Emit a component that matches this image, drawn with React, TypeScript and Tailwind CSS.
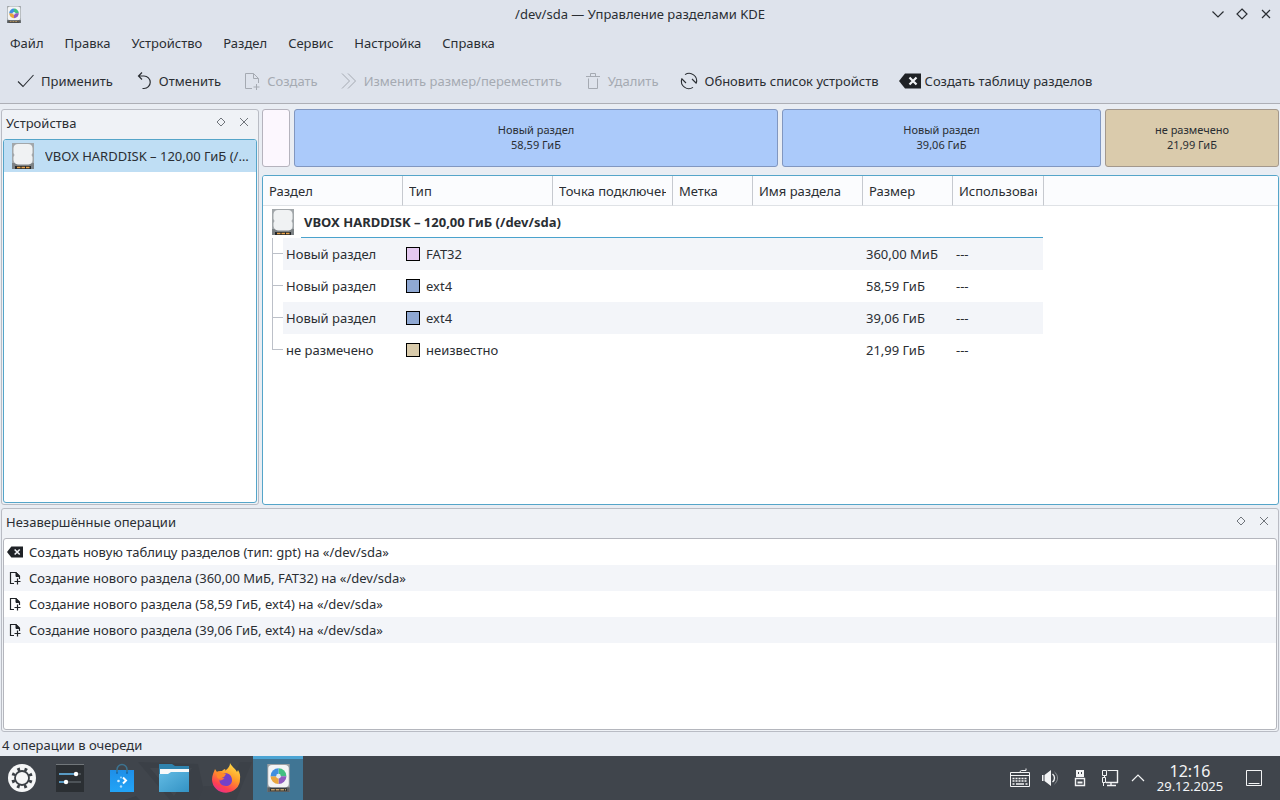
import React from "react";
import clsx from "clsx";

const menu = [
  "Файл",
  "Правка",
  "Устройство",
  "Раздел",
  "Сервис",
  "Настройка",
  "Справка",
];

const actions = [
  { title: "Применить", Icon: ApplyIcon },
  { title: "Отменить", Icon: UndoIcon },
  { title: "Создать", Icon: NewIcon, disabled: true },
  { title: "Изменить размер/переместить", Icon: ResizeIcon, disabled: true },
  { title: "Удалить", Icon: TrashIcon, disabled: true },
  { title: "Обновить список устройств", Icon: RefreshIcon },
  { title: "Создать таблицу разделов", Icon: ClearIcon },
];

const blocks = [
  { title: "", size: "", grow: 26, color: "bg-[#fcf7fe] border-[#b5b3bd]" },
  {
    title: "Новый раздел",
    size: "58,59 ГиБ",
    grow: 482,
    color: "bg-[#abcafa] border-[#8197c0]",
  },
  {
    title: "Новый раздел",
    size: "39,06 ГиБ",
    grow: 317,
    color: "bg-[#abcafa] border-[#8197c0]",
  },
  {
    title: "не размечено",
    size: "21,99 ГиБ",
    grow: 172,
    color: "bg-[#dacbac] border-[#a3988c]",
  },
];

const columns = [
  { title: "Раздел", width: "w-[140px]" },
  { title: "Тип", width: "w-[150px]" },
  { title: "Точка подключения", width: "w-[120px]" },
  { title: "Метка", width: "w-[80px]" },
  { title: "Имя раздела", width: "w-[110px]" },
  { title: "Размер", width: "w-[90px]" },
  { title: "Использовано", width: "w-[91px]" },
];

const partitions = [
  { name: "Новый раздел", fs: "FAT32", size: "360,00 МиБ", color: "bg-[#e4c9f0]" },
  { name: "Новый раздел", fs: "ext4", size: "58,59 ГиБ", color: "bg-[#8fa8d3]" },
  { name: "Новый раздел", fs: "ext4", size: "39,06 ГиБ", color: "bg-[#8fa8d3]" },
  { name: "не размечено", fs: "неизвестно", size: "21,99 ГиБ", color: "bg-[#d9cbab]" },
];

const operations = [
  { title: "Создать новую таблицу разделов (тип: gpt) на «/dev/sda»", Icon: ClearIcon },
  { title: "Создание нового раздела (360,00 МиБ, FAT32) на «/dev/sda»", Icon: NewSmallIcon },
  { title: "Создание нового раздела (58,59 ГиБ, ext4) на «/dev/sda»", Icon: NewSmallIcon },
  { title: "Создание нового раздела (39,06 ГиБ, ext4) на «/dev/sda»", Icon: NewSmallIcon },
];

export default function App() {
  return (
    <div className="flex min-h-screen flex-col bg-[#e9edf3] font-['Noto_Sans',sans-serif] text-[13px] leading-[18px] text-[#2a2e33]">
      <header className="border-b border-[#adafb6] bg-[#dee3ec]">
        <TitleBar />
        <nav className="flex h-[30px] items-center gap-px">
          {menu.map((item) => (
            <button key={item} className="px-[10px]">
              {item}
            </button>
          ))}
        </nav>
        <div className="flex h-[45px] items-center gap-1 pl-[7px]">
          {actions.map(({ title, Icon, disabled }) => (
            <button
              key={title}
              disabled={disabled}
              className="flex items-center gap-1 px-2 whitespace-nowrap disabled:text-[#a5aab2]"
            >
              <Icon className="h-[22px] w-[22px]" />
              {title}
            </button>
          ))}
        </div>
      </header>

      <main className="flex flex-1 gap-[3px] px-px pt-[5px] pb-[3px]">
        <Dock title="Устройства" className="w-[258px] shrink-0" active>
          <button className="flex h-8 w-full items-center gap-[10px] bg-[#bfdef4] pr-1 pl-[7px] text-left">
            <DiskIcon className="h-[26px] w-6 shrink-0" />
            <span className="truncate">VBOX HARDDISK – 120,00 ГиБ (/dev/sda)</span>
          </button>
        </Dock>
        <div className="flex min-w-0 flex-1 flex-col gap-2">
          <div className="flex h-[58px] gap-1">
            {blocks.map((block, i) => (
              <button
                key={i}
                aria-label={block.title ? undefined : "FAT32"}
                style={{ flexGrow: block.grow }}
                className={clsx(
                  "min-w-0 basis-0 rounded-[3px] border pb-0.5 text-[11px] leading-[15px]",
                  block.color
                )}
              >
                {block.title}
                <br />
                {block.size}
              </button>
            ))}
          </div>
          <PartitionTable />
        </div>
      </main>

      <section className="flex h-56 px-px">
        <Dock title="Незавершённые операции" className="flex-1">
          <ul>
            {operations.map(({ title, Icon }, i) => (
              <li
                key={i}
                className="flex h-[26px] items-center gap-[6px] pl-[3px] even:bg-[#f3f5f9]"
              >
                <Icon className="h-4 w-4" />
                {title}
              </li>
            ))}
          </ul>
        </Dock>
      </section>

      <div className="flex h-6 items-center px-0.5 pt-0.5">4 операции в очереди</div>
      <Taskbar />
    </div>
  );
}

function TitleBar() {
  return (
    <div className="grid h-7 grid-cols-[1fr_auto_1fr] items-center">
      <PartitionManagerIcon className="ml-[7px] h-[17px] w-[14px]" />
      <h1>/dev/sda — Управление разделами KDE</h1>
      <div className="flex justify-end pr-0.5">
        <button aria-label="Свернуть" className="flex w-6 justify-center">
          <svg viewBox="0 0 16 16" className="h-4 w-4 fill-none stroke-current stroke-[1.2]">
            <path d="M2.500 5.500 8 11l5.500-5.500" />
          </svg>
        </button>
        <button aria-label="Восстановить" className="flex w-6 justify-center">
          <svg viewBox="0 0 16 16" className="h-4 w-4 fill-none stroke-current stroke-[1.2]">
            <path d="M8 3l5 5-5 5-5-5z" />
          </svg>
        </button>
        <button aria-label="Закрыть" className="flex w-6 justify-center">
          <svg viewBox="0 0 16 16" className="h-4 w-4 fill-none stroke-current stroke-[1.2]">
            <path d="M4 4l8 8m0-8l-8 8" />
          </svg>
        </button>
      </div>
    </div>
  );
}

function Dock({
  title,
  className,
  active,
  children,
}: {
  title: string;
  className?: string;
  active?: boolean;
  children: React.ReactNode;
}) {
  return (
    <div
      className={clsx(
        "flex flex-col rounded-[3px] border border-[#b9bcc4] bg-[#eff2f6] px-px pb-px",
        className
      )}
    >
      <div className="flex h-[29px] items-center gap-[7px] pr-[5px] pb-1 pl-[3px]">
        <h2 className="flex-1">{title}</h2>
        <button aria-label="Открепить">
          <svg viewBox="0 0 16 16" className="h-4 w-4 fill-none stroke-[#70757b]">
            <path d="M8 3l4 4-4 4-4-4z" />
          </svg>
        </button>
        <button aria-label="Закрыть панель">
          <svg viewBox="0 0 16 16" className="h-4 w-4 fill-none stroke-[#70757b]">
            <path d="M4 3l8 8m0-8l-8 8" />
          </svg>
        </button>
      </div>
      <div
        className={clsx(
          "flex-1 overflow-hidden rounded-[3px] border bg-white",
          active ? "border-[#55a5c9]" : "border-[#b4b6bd]"
        )}
      >
        {children}
      </div>
    </div>
  );
}

function PartitionTable() {
  return (
    <div className="flex-1 overflow-hidden rounded-[3px] border border-[#55a5c9] bg-white">
      <table className="w-full table-fixed border-separate border-spacing-0 text-left">
        <thead>
          <tr className="h-[30px] bg-[#fbfcfe]">
            {columns.map((col) => (
              <th
                key={col.title}
                className={clsx(
                  "border-r border-b border-r-[#c6c9cf] border-b-[#dfe2e6] py-0 pr-[6px] pl-[6px] font-normal",
                  col.width
                )}
              >
                <div className="overflow-hidden whitespace-nowrap">{col.title}</div>
              </th>
            ))}
            <th className="border-b border-[#dfe2e6]" />
          </tr>
        </thead>
        <tbody>
          <tr>
            <td colSpan={7} className="p-0">
              <div className="flex h-8 items-stretch gap-[6px] pr-px pl-2">
                <DiskIcon className="mt-[3px] h-[26px] w-6" />
                <div className="flex flex-1 items-center border-b border-b-[#4ba3cd] pl-[3px] font-bold">
                  VBOX HARDDISK – 120,00 ГиБ (/dev/sda)
                </div>
              </div>
            </td>
            <td />
          </tr>
          {partitions.map((p, i) => {
            const bg = i % 2 === 0 ? "bg-[#f3f5f9]" : "bg-white";
            return (
              <tr key={i} className="h-8">
                <td className="p-0">
                  <div className="flex h-8 pl-[9px]">
                    <div className="w-[11px] shrink-0">
                      <div className="h-4 border-b border-l border-[#bcc0c8]" />
                      {i < partitions.length - 1 && (
                        <div className="h-4 border-l border-[#bcc0c8]" />
                      )}
                    </div>
                    <div className={clsx("flex flex-1 items-center pl-[3px] whitespace-nowrap", bg)}>
                      {p.name}
                    </div>
                  </div>
                </td>
                <td className={clsx("px-[3px] py-0", bg)}>
                  <div className="flex items-center gap-[6px]">
                    <span className={clsx("h-[14px] w-[14px] border border-black", p.color)} />
                    {p.fs}
                  </div>
                </td>
                <td className={bg} />
                <td className={bg} />
                <td className={bg} />
                <td className={clsx("px-[3px] py-0 whitespace-nowrap", bg)}>{p.size}</td>
                <td className={clsx("border-r border-white px-[3px] py-0", bg)}>---</td>
                <td />
              </tr>
            );
          })}
        </tbody>
      </table>
    </div>
  );
}

function Taskbar() {
  const apps = [
    { title: "Параметры системы", Icon: SettingsIcon },
    { title: "Discover", Icon: DiscoverIcon },
    { title: "Dolphin", Icon: FolderIcon },
    { title: "Firefox", Icon: FirefoxIcon },
  ];
  return (
    <footer className="relative flex h-11 items-stretch justify-between bg-[#40454c] text-[#f3f4f5]">
      {/* wallpaper showing through the panel */}
      <svg viewBox="0 0 320 44" className="absolute top-0 left-0 h-11 w-80" aria-hidden="true">
        <path d="M138 6l32 38h36L198 8z" fill="#3b4047" />
        <path d="M150 12l24 28 18-28z" fill="#42474e" />
        <path d="M240 6h12l-16 38h-38l6-14h24z" fill="#3c4148" />
        <path d="M136 40l-12 4h16z" fill="#3a3f45" />
      </svg>
      <div className="relative flex gap-0.5">
        <button aria-label="Меню приложений" className="flex w-[43px] items-center justify-center">
          <LauncherIcon className="h-7 w-7" />
        </button>
        {apps.map(({ title, Icon }) => (
          <button
            key={title}
            aria-label={title}
            className="flex w-[50px] items-center justify-center"
          >
            <Icon className="h-8 w-8" />
          </button>
        ))}
        <button
          aria-label="Управление разделами"
          className="flex w-[50px] items-center justify-center border-t-[3px] border-[#4ca4d3] bg-[#407594] pb-[3px]"
        >
          <PartitionManagerIcon className="h-[28px] w-[23px]" />
        </button>
      </div>
      <Tray />
    </footer>
  );
}

function Tray() {
  return (
    <div className="flex items-center pr-px">
      <button aria-label="Клавиатура" className="flex w-[30px] justify-center">
        <svg viewBox="0 0 22 22" className="h-[22px] w-[22px] fill-none stroke-current">
          <path d="M1.500 5.500h19v14h-19zM1.500 8.500h19M11 5.500V4.500l1.500-1h4.500V1.500" />
          <path d="M3.500 11.500h15M3.500 14h15" strokeWidth="1.600" strokeDasharray="2 1" />
          <path d="M3.500 17h2m1.500 0h8m1.500 0h2" strokeWidth="1.600" />
        </svg>
      </button>
      <button aria-label="Громкость" className="flex w-[30px] justify-center">
        <svg viewBox="0 0 22 22" className="h-[22px] w-[22px] fill-none stroke-current">
          <path d="M3 8h1.500v6H3zM5.500 8 12 3v16l-6.500-5z" fill="currentColor" stroke="none" />
          <path d="M13.500 7a5 5 0 0 1 0 8" strokeWidth="1.400" />
          <path d="M15.500 5a7.500 7.500 0 0 1 0 12" opacity=".4" />
        </svg>
      </button>
      <button aria-label="Съёмные носители" className="flex w-[30px] justify-center">
        <svg viewBox="0 0 22 22" className="h-[22px] w-[22px] fill-none stroke-current">
          <path d="M7 3h8v7H7z" fill="currentColor" stroke="none" />
          <path d="M9.500 5v2m3-2v2" stroke="#40454c" />
          <path d="M6.500 11.500h9v7h-9z" strokeWidth="1.400" />
          <path d="M8.500 15.500h5" strokeWidth="2" />
        </svg>
      </button>
      <button aria-label="Сеть" className="flex w-[30px] justify-center">
        <svg viewBox="0 0 22 22" className="h-[22px] w-[22px] fill-none stroke-current">
          <path d="M8.500 3.500h10v12h-11M3.500 3.500h4v5h-4zM5.500 8.500v2m-2 0h3v5h-3zM4.500 16v3" />
          <path d="M18.500 3v13M7 15.500h12M8 18.500h9M12 16v2" strokeWidth="1.400" />
        </svg>
      </button>
      <button aria-label="Показать скрытые значки" className="flex w-[26px] justify-center">
        <svg viewBox="0 0 16 16" className="h-4 w-4 fill-none stroke-current stroke-[1.2]">
          <path d="M2 11l6-6 6 6" />
        </svg>
      </button>
      <button className="w-[78px] text-center">
        <span className="block text-base leading-[16px]">12:16</span>
        <span className="block leading-[14px]">29.12.2025</span>
      </button>
      <button aria-label="Показать рабочий стол" className="flex w-[50px] justify-center">
        <svg viewBox="0 0 18 18" className="h-[18px] w-[18px] fill-none stroke-current">
          <path d="M1.500 1.500h15v15h-15zM3.500 14.500h11" />
        </svg>
      </button>
    </div>
  );
}

/* toolbar icons */

type IconProps = { className?: string };

function ApplyIcon({ className }: IconProps) {
  return (
    <svg viewBox="0 0 22 22" className={clsx("fill-none stroke-current stroke-[1.1]", className)}>
      <path d="M3 11.500l5 5L18.500 5" />
    </svg>
  );
}

function UndoIcon({ className }: IconProps) {
  return (
    <svg viewBox="0 0 22 22" className={clsx("fill-none stroke-current stroke-[1.2]", className)}>
      <path d="M9 2.500 5.500 6 9 9.500M5.500 6H11a6 6 0 0 1 0 12.500H9.500" />
    </svg>
  );
}

function NewIcon({ className }: IconProps) {
  return (
    <svg viewBox="0 0 22 22" className={clsx("fill-none stroke-current", className)}>
      <path d="M11 18.500H4.500v-15h8l5 5V13M12.500 3.500v5h5M15.500 14v6m-3-3h6" />
    </svg>
  );
}

function NewSmallIcon({ className }: IconProps) {
  return (
    <svg viewBox="0 0 16 16" className={clsx("fill-none stroke-[#1f2226]", className)}>
      <path d="M7 13.500H3.500v-11H9l3.500 3.500v3" strokeWidth="1.200" />
      <path d="M9 2.500 12.500 6.500H9z" fill="#1f2226" />
      <path d="M10.500 8.500v6m-3-3h6" strokeWidth="1.200" />
    </svg>
  );
}

function ResizeIcon({ className }: IconProps) {
  return (
    <svg viewBox="0 0 22 22" className={clsx("fill-none stroke-current", className)}>
      <path d="M4 3.500l7.500 7.500L4 18.500M10 3.500l7.500 7.500-7.500 7.500" />
    </svg>
  );
}

function TrashIcon({ className }: IconProps) {
  return (
    <svg viewBox="0 0 22 22" className={clsx("fill-none stroke-current", className)}>
      <path d="M4 6.500h14M8.500 6.500v-3h5v3M6.500 8.500v10h9v-10" />
    </svg>
  );
}

function RefreshIcon({ className }: IconProps) {
  return (
    <svg viewBox="0 0 22 22" className={clsx("fill-none stroke-current stroke-[1.1]", className)}>
      <path d="M7 4.600A7.500 7.500 0 0 1 18.300 13M18.500 13.500l-4.500-4.500" />
      <path d="M15 17.400A7.500 7.500 0 0 1 3.700 9M3.500 8.500l4.500 4.500" />
    </svg>
  );
}

function ClearIcon({ className }: IconProps) {
  return (
    <svg viewBox="0 0 22 22" className={className}>
      <path d="M0 11l6-7.500h16v15H6z" fill="#1f2226" />
      <path d="M10.500 7.500l7 7m0-7l-7 7" stroke="#f1f3f6" strokeWidth="2.200" />
    </svg>
  );
}

/* colour icons */

function DiskIcon({ className }: IconProps) {
  return (
    <svg viewBox="0 0 24 26" className={className}>
      <path d="M1 0h22v26H1z" fill="#a2a7aa" />
      <path d="M1 20h22v6H1z" fill="#7c8184" />
      <path
        d="M7 1h10q4 0 4.500 4v5l-1 2 1 2v3q0 4-4 4.500H7q-4-.500-4.500-4.500v-3l1-2-1-2V5Q3 1 7 1z"
        fill="#f0f2f3"
      />
      <path d="M4 23h16v3H4z" fill="#25282a" />
      <path d="M6 24.500h12.500" stroke="#eba44c" strokeWidth="1.400" strokeDasharray="3.500 1" />
    </svg>
  );
}

function PartitionManagerIcon({ className }: IconProps) {
  return (
    <svg viewBox="4 1 24 30" className={className}>
      <path d="M4 1h24v30H4z" fill="#9ba0a3" />
      <path d="M4 26h24v5H4z" fill="#5b6063" />
      <path d="M9 2h14q4 0 4 4v16q0 4-4 4H9q-4 0-4-4V6q0-4 4-4z" fill="#f3f4f5" />
      <path d="M16 14V5.500a8.500 8.500 0 0 1 8.500 8.500z" fill="#42bf82" />
      <path d="M16 14h8.500a8.500 8.500 0 0 1-8.500 8.500z" fill="#8f5bc0" />
      <path d="M16 14v8.500a8.500 8.500 0 0 1-8.500-8.500z" fill="#e9a63e" />
      <path d="M16 14H7.500a8.500 8.500 0 0 1 8.500-8.500z" fill="#3f8fe0" />
      <circle cx="16" cy="14" r="2.500" fill="#e4eaf0" />
      <path d="M7 28.500h18" stroke="#2c2f31" strokeWidth="3" />
      <path d="M8 28.500h16" stroke="#c4a06a" strokeWidth="1.600" strokeDasharray="4 1" />
    </svg>
  );
}

function LauncherIcon({ className }: IconProps) {
  return (
    <svg viewBox="0 0 28 28" className={className}>
      <circle cx="14" cy="14" r="14" fill="#f5f6f7" />
      <circle
        cx="14"
        cy="14"
        r="9"
        fill="none"
        stroke="#3b4046"
        strokeWidth="3.500"
        strokeDasharray="2.700 4.368"
        transform="rotate(14 14 14)"
      />
      <circle cx="14" cy="14" r="7" fill="none" stroke="#3b4046" strokeWidth="1.800" />
    </svg>
  );
}

function SettingsIcon({ className }: IconProps) {
  return (
    <svg viewBox="0 0 32 32" className={className}>
      <path d="M2 2h28v28H2z" fill="#2b2f33" />
      <path d="M2 2.500h28" stroke="#71767a" />
      <path d="M5 12h22M5 20h22" stroke="#5a6066" strokeWidth="1.500" />
      <path d="M5 12h16M5 20h6" stroke="#5db2e6" strokeWidth="1.500" />
      <circle cx="22" cy="12" r="2.200" fill="#fff" />
      <circle cx="12" cy="20" r="2.200" fill="#fff" />
    </svg>
  );
}

function DiscoverIcon({ className }: IconProps) {
  return (
    <svg viewBox="0 0 32 32" className={className}>
      <defs>
        <linearGradient id="bag" x1="0" y1="0" x2="0" y2="1">
          <stop offset="0" stopColor="#1f8fe8" />
          <stop offset="1" stopColor="#22a4f7" />
        </linearGradient>
      </defs>
      <path d="M4 8h24v22H4z" fill="url(#bag)" />
      <path d="M11 11V7.500a5 5 0 0 1 10 0V11" fill="none" stroke="#3c7390" strokeWidth="1.500" />
      <circle cx="11" cy="11" r="1" fill="#126bb5" />
      <circle cx="21" cy="11" r="1" fill="#126bb5" />
      <path d="M17 15.500l3 3-3 3" fill="none" stroke="#fff" strokeWidth="2" />
      <circle cx="12.500" cy="19" r="1.300" fill="#d6edfd" />
      <circle cx="15" cy="15.500" r=".9" fill="#a9d9fb" />
      <circle cx="15" cy="24.500" r="1.200" fill="#a9d9fb" />
    </svg>
  );
}

function FolderIcon({ className }: IconProps) {
  return (
    <svg viewBox="0 0 32 32" className={className}>
      <defs>
        <linearGradient id="folder" x1="0" y1="0" x2="1" y2="1">
          <stop offset="0" stopColor="#62bbe4" />
          <stop offset="1" stopColor="#3392c4" />
        </linearGradient>
      </defs>
      <path d="M1 2h13l3 2h14v9H1z" fill="#2f83ae" />
      <path d="M2 7h29v6H2z" fill="#f7f9fa" />
      <path d="M1 12h9l3-2h18v20H1z" fill="url(#folder)" />
    </svg>
  );
}

function FirefoxIcon({ className }: IconProps) {
  return (
    <svg viewBox="0 0 32 32" className={className}>
      <defs>
        <linearGradient id="fox" x1=".8" y1="0" x2=".3" y2="1">
          <stop offset="0" stopColor="#ffe14a" />
          <stop offset=".45" stopColor="#ff9a28" />
          <stop offset=".8" stopColor="#ff4150" />
          <stop offset="1" stopColor="#e8308c" />
        </linearGradient>
      </defs>
      <path
        d="M20 1c1 3 5 5 7 9l1-2c2 3 2.500 6 2 9a14 13.500 0 0 1-28 .5C2 13 4 10 5 7l2 3c2-1 3-1 5-1 1-1 2-2 3-2 0 0 1 1 0 2 2-2 5-4 5-8z"
        fill="url(#fox)"
      />
      <path
        d="M13 12c4-2 9 1 9 6 0 4-3 6-6 6-4 0-7-3-6.500-6 1 1 3 0 5-1.500-1-.500-3-.500-4-1.500 0-1.500 1.500-2.500 2.500-3z"
        fill="#7541c8"
      />
      <path d="M7 10c2-1 4 0 5 1l4 1-2 3-4 1.500c-3 1-4-3-3-6.500z" fill="#ff8a2a" />
    </svg>
  );
}
